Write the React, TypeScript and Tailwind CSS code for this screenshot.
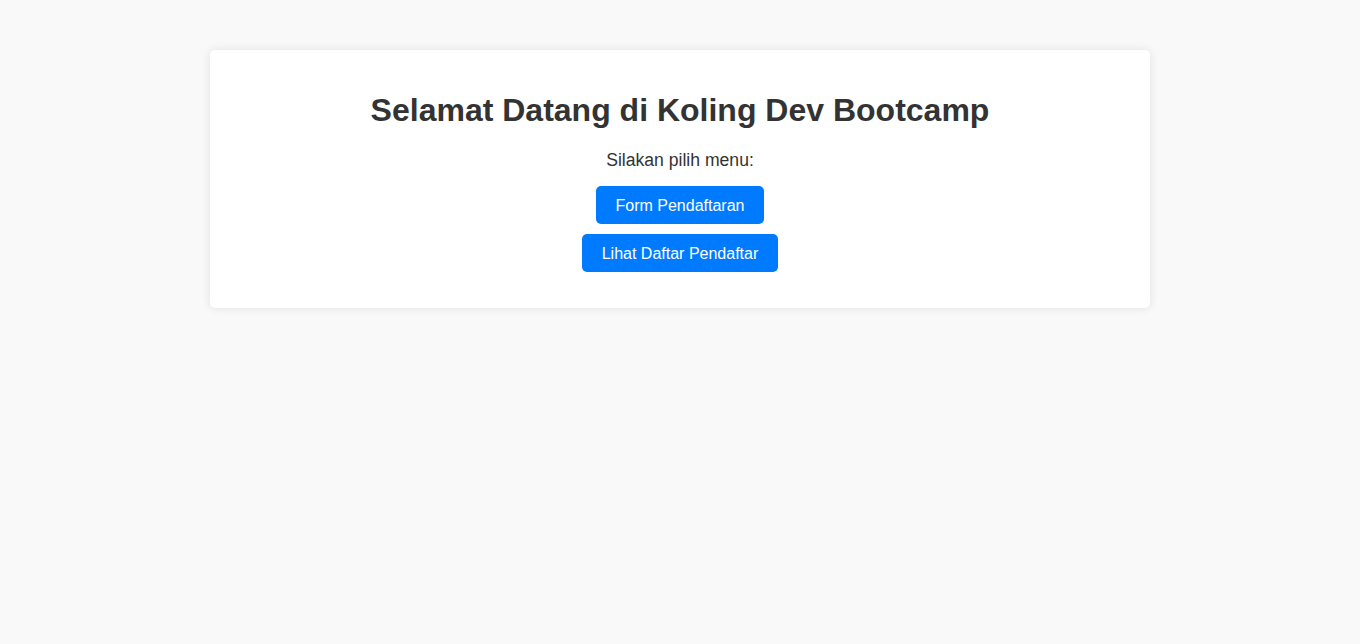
const App = () => {
  return (
    <div className="min-h-screen bg-[#f9f9f9] pt-[50px] font-['Liberation_Sans',Arial,sans-serif] text-[#333]">
      <div className="mx-auto w-[940px] rounded-[5px] bg-white px-5 pt-5 pb-9 text-center shadow-[0_0_10px_rgba(0,0,0,0.1)]">
        <h1 className="mt-[22px] mb-[21px] text-[32px] leading-[37px] font-bold">
          Selamat Datang di Koling Dev Bootcamp
        </h1>
        <p className="text-[17.6px] leading-[20px]">Silakan pilih menu:</p>

        <div className="mt-4 flex flex-col items-center gap-[10px]">
          <a
            href="#"
            className="h-[38px] rounded-[5px] bg-[#007bff] px-5 pt-px text-[16px] leading-[37px] text-white"
          >
            Form Pendaftaran
          </a>
          <a
            href="#"
            className="h-[38px] rounded-[5px] bg-[#007bff] px-5 pt-px text-[16px] leading-[37px] text-white"
          >
            Lihat Daftar Pendaftar
          </a>
        </div>
      </div>
    </div>
  );
};

export default App;
